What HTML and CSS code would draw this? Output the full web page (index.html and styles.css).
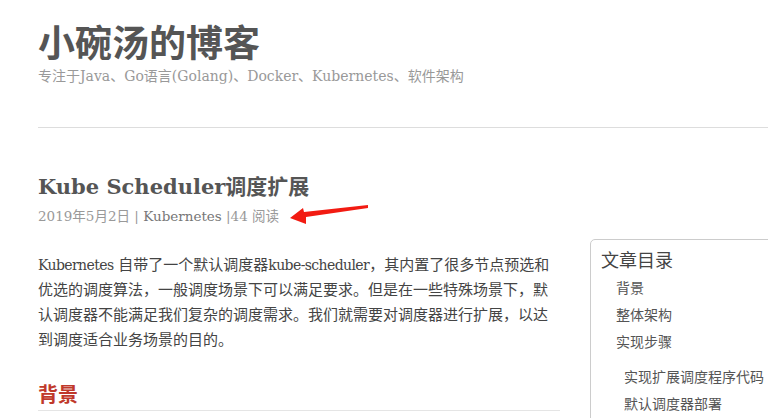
FILE: index.html
```html
<!DOCTYPE html>
<html lang="zh-CN">
<head>
<meta charset="utf-8">
<title>Kube Scheduler调度扩展 - 小碗汤的博客</title>
<link rel="stylesheet" href="styles.css">
</head>
<body>
<div class="page">
  <header class="site-header">
    <h1 class="site-title">小碗汤的博客</h1>
    <p class="site-desc">专注于Java、Go语言(Golang)、Docker、Kubernetes、软件架构</p>
  </header>
  <hr class="site-rule">
  <div class="main">
    <article class="post">
      <h2 class="post-title">Kube Scheduler调度扩展</h2>
      <div class="post-meta">2019年5月2日 | <a class="meta-link" href="#">Kubernetes</a> |44 阅读</div>
      <p class="post-text"><span class="latin">Kubernetes</span> 自带了一个默认调度器<span class="latin">kube-scheduler</span>，其内置了很多节点预选和优选的调度算法，一般调度场景下可以满足要求。但是在一些特殊场景下，默认调度器不能满足我们复杂的调度需求。我们就需要对调度器进行扩展，以达到调度适合业务场景的目的。</p>
      <h3 class="section-title">背景</h3>
    </article>
    <aside class="toc">
      <div class="toc-title">文章目录</div>
      <ul class="toc-list">
        <li>背景</li>
        <li>整体架构</li>
        <li>实现步骤</li>
      </ul>
      <ul class="toc-sub">
        <li>实现扩展调度程序代码</li>
        <li>默认调度器部署</li>
      </ul>
    </aside>
  </div>
  <svg class="arrow" width="90" height="30" viewBox="0 0 90 30">
    <polygon points="2,24 15,14 16,18 80,11 80,14 18,23 18,30" fill="#f21b12"/>
  </svg>
</div>
</body>
</html>
```

FILE: styles.css
```css
html, body {
  margin: 0;
  padding: 0;
  background: #fff;
  overflow: hidden;
}
body {
  font-family: "DejaVu Serif", "Noto Sans CJK SC", serif;
  color: #444;
}
.page {
  position: relative;
  width: 768px;
  height: 418px;
  overflow: hidden;
}
.site-header {
  padding: 18px 0 0 38px;
}
.site-title {
  margin: 0;
  font-family: "Noto Sans CJK SC", sans-serif;
  font-size: 37px;
  line-height: 46px;
  font-weight: 700;
  color: #555;
}
.site-desc {
  margin: 2px 0 0;
  font-size: 14px;
  line-height: 20px;
  color: #999;
}
.site-rule {
  margin: 41px 0 0 38px;
  border: 0;
  border-top: 1px solid #ddd;
  height: 0;
}
.main {
  display: flex;
  padding-left: 38px;
  gap: 30px;
}
.post {
  width: 522px;
  flex: none;
}
.post-title {
  margin: 43px 0 0;
  font-size: 21px;
  line-height: 32px;
  font-weight: 700;
  color: #555;
}
.post-meta {
  margin-top: 3px;
  font-size: 13.5px;
  line-height: 20px;
  color: #999;
}
.meta-link {
  color: #777;
  text-decoration: none;
}
.post-text {
  margin: 27px 0 0;
  font-size: 15px;
  line-height: 25px;
  color: #444;
}
.latin {
  font-size: 14px;
  letter-spacing: -0.6px;
}
.section-title {
  margin: 27px 0 0;
  padding-bottom: 2px;
  font-family: "Noto Sans CJK SC", sans-serif;
  font-size: 20px;
  line-height: 28px;
  font-weight: 700;
  color: #c0392b;
  border-bottom: 1px solid #e5e5e5;
}
.toc {
  flex: none;
  width: 220px;
  margin-top: 111px;
  border: 1px solid #ccc;
  border-radius: 5px;
  padding: 6px 10px 10px;
  font-family: "Noto Sans CJK SC", sans-serif;
  color: #555;
}
.toc-title {
  font-size: 18px;
  line-height: 26px;
  color: #444;
}
.toc-list, .toc-sub {
  list-style: none;
  margin: 0;
  padding: 0 0 0 15px;
  font-size: 14px;
  line-height: 27px;
}
.toc-list {
  margin-top: 2px;
}
.toc-sub {
  padding-left: 23px;
  margin-top: 8px;
}
.arrow {
  position: absolute;
  left: 288px;
  top: 194px;
}
```
